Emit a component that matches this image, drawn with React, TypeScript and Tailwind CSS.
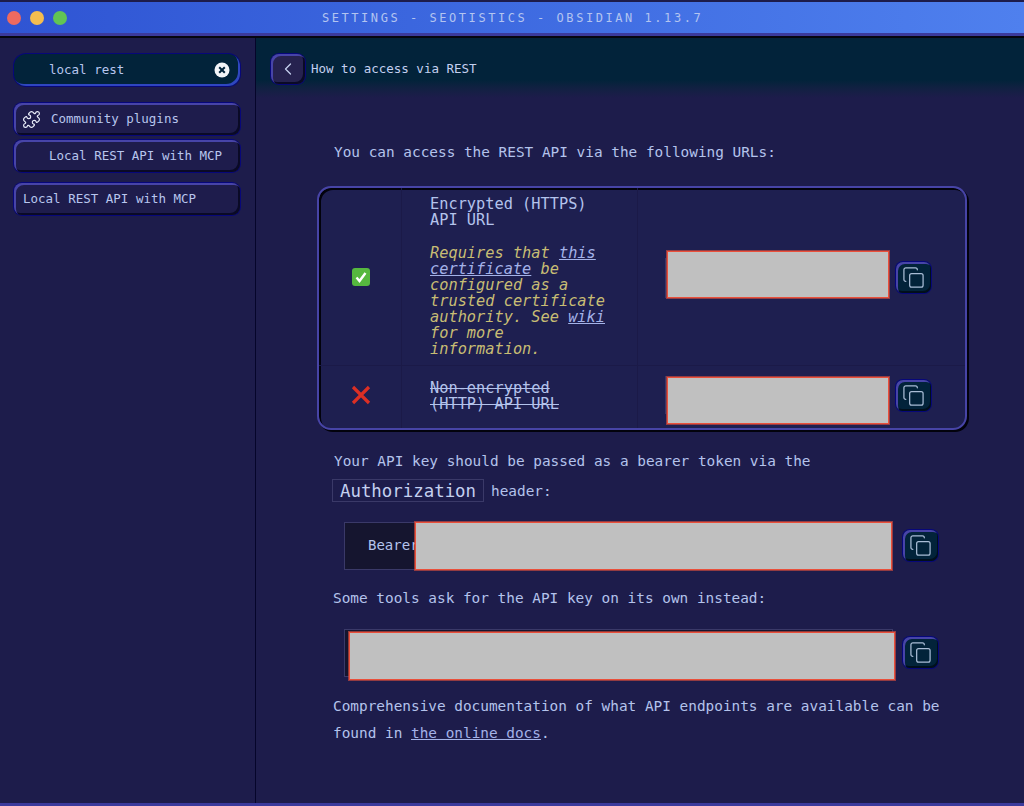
import { ChevronLeft, Copy, Puzzle } from "lucide-react";

function CopyButton({ className }: { className?: string }) {
  return (
    <button
      className={`flex h-[31px] w-[35px] shrink-0 items-center justify-center rounded-[7px] bg-[#02233a] text-[#a9bdd6] shadow-[inset_2px_2px_0_#4744a8,inset_-1px_-2px_0_#010f1c,0_0_0_1px_#07077a] ${className ?? ""}`}
    >
      <Copy size={23} strokeWidth={1.3} />
    </button>
  );
}

function NavItem({ children, className }: { children: React.ReactNode; className?: string }) {
  return (
    <div
      className={`flex h-[32px] w-[226px] items-center rounded-[8px] bg-[#1e1c4c] text-[12.5px] text-[#b8c6ee] shadow-[inset_2px_2px_0_#4744a8,inset_-2px_-2px_0_#0a0a26,0_0_0_1px_#07077a] ${className ?? ""}`}
    >
      {children}
    </div>
  );
}

function Redacted({ className }: { className: string }) {
  return (
    <div
      className={`absolute border border-[#ea503b] bg-[#c0c0c0] shadow-[0_0_0_1px_rgba(226,80,60,0.6)] ${className}`}
    />
  );
}

export default function App() {
  return (
    <div className="flex h-[806px] w-[1024px] flex-col overflow-hidden bg-[#1d1c4b] font-['DejaVu_Sans_Mono',monospace] text-[#b4c3ec]">
      {/* title bar */}
      <div className="mt-[2px] flex h-[31px] shrink-0 items-center bg-gradient-to-r from-[#2f54d3] to-[#4f80ee] pl-[7px]">
        <div className="flex gap-[9px]">
          <span className="h-[14px] w-[14px] rounded-full bg-[#ee6a5f]" />
          <span className="h-[14px] w-[14px] rounded-full bg-[#f5bd4f]" />
          <span className="h-[14px] w-[14px] rounded-full bg-[#61c454]" />
        </div>
        <div className="ml-[255px] whitespace-nowrap text-[12px] tracking-[2.55px] text-[#b3c4f0]">
          SETTINGS - SEOTISTICS - OBSIDIAN 1.13.7
        </div>
      </div>

      <div className="flex min-h-0 flex-1 flex-col border-t-[3px] border-b-[3px] border-[#3b3a9c]">
        <div className="flex min-h-0 flex-1 border-t-2 border-[#05060f]">
          {/* sidebar */}
          <div className="w-[256px] shrink-0 border-r border-[#05052a] pl-[14px] pt-[16px]">
            <div className="flex h-[32px] w-[226px] items-center rounded-[12px] bg-[#02233a] pl-[35px] pr-[10px] text-[12.5px] text-[#b8c6ee] shadow-[inset_-2px_-2px_0_#2f46c0,0_0_0_1px_#07077a]">
              <span className="flex-1">local rest</span>
              <svg width="16" height="16" viewBox="0 0 16 16">
                <circle cx="8" cy="8" r="7.5" fill="#f2f4f8" />
                <path d="M5.2 5.2l5.6 5.6M10.8 5.2l-5.6 5.6" stroke="#02233a" strokeWidth="2" />
              </svg>
            </div>
            <NavItem className="mt-[17px] pl-[8px]">
              <Puzzle size={19} strokeWidth={1.5} className="text-[#e8ecf8]" />
              <span className="ml-[10px]">Community plugins</span>
            </NavItem>
            <NavItem className="mt-[5px] pl-[35px]">Local REST API with MCP</NavItem>
            <NavItem className="mt-[11px] pl-[9px]">Local REST API with MCP</NavItem>
          </div>

          {/* main */}
          <div className="min-w-0 flex-1">
            <div className="flex h-[60px] items-center bg-gradient-to-b from-[#02233a] from-70% to-[#1d1c4b] pt-[2px] pl-[15px]">
              <button className="flex h-[30px] w-[34px] items-center justify-center rounded-[8px] bg-[#26224f] text-[#c4cfee] shadow-[inset_2px_2px_0_#4744a8,inset_-2px_-2px_0_#0a0a26,0_0_0_1px_#07077a]">
                <ChevronLeft size={20} strokeWidth={1.5} />
              </button>
              <span className="ml-[6px] text-[12.5px] text-[#c4d0f0]">How to access via REST</span>
            </div>

            <div className="pl-[61px] pt-[41px]">
              <p className="pl-[17px] text-[14.4px] leading-[27px]">
                You can access the REST API via the following URLs:
              </p>

              {/* url table */}
              <div className="mt-[20px] grid h-[244px] w-[650px] grid-cols-[83px_236px_1fr] grid-rows-[178px_1fr] rounded-[14px] border-2 border-[#4744a6] bg-[#1e1f50] text-[15.3px] leading-[16px] shadow-[inset_2px_2px_0_#02020c,2px_2px_0_#02020c]">
                <div className="flex items-center justify-center border-r border-b border-[#1b1a48] pl-[2px]">
                  <svg width="20" height="20" viewBox="0 0 20 20">
                    <rect x="1" y="1" width="18" height="18" rx="3" fill="#56b83f" />
                    <path d="M5.5 10.5l3 3.5 6-8" fill="none" stroke="#fff" strokeWidth="2.4" />
                  </svg>
                </div>
                <div className="border-r border-b border-[#1b1a48] pl-[28px] pt-[8px]">
                  <div>
                    Encrypted (HTTPS)
                    <br />
                    API URL
                  </div>
                  <div className="mt-[17px] w-[190px] italic text-[#c8bd74]">
                    Requires that{" "}
                    <a className="font-medium text-[#a4b2e8] underline">this certificate</a> be
                    configured as a trusted certificate authority. See{" "}
                    <a className="text-[#a4b2e8] underline">wiki</a> for more information.
                  </div>
                </div>
                <div className="flex items-center gap-[7px] border-b border-[#1b1a48] pl-[27px]">
                  <div className="relative mt-[2px] h-[40px] w-[224px] border-l border-[#3a3968]">
                    <Redacted className="-top-[7px] left-[1px] h-[47px] w-[222px]" />
                  </div>
                  <CopyButton className="mt-[2px]" />
                </div>

                <div className="flex items-center justify-center border-r border-[#1b1a48] pb-[5px] pl-[2px]">
                  <svg width="20" height="20" viewBox="0 0 20 20">
                    <path d="M2 2l16 16M18 2L2 18" stroke="#dc2f24" strokeWidth="3.2" />
                  </svg>
                </div>
                <div className="flex items-center border-r border-[#1b1a48] pl-[28px] pb-[3px] line-through">
                  <div>
                    Non-encrypted
                    <br />
                    (HTTP) API URL
                  </div>
                </div>
                <div className="flex items-center gap-[7px] pl-[27px]">
                  <div className="relative -mt-[4px] h-[38px] w-[224px] border-l border-[#3a3968]">
                    <Redacted className="top-[1px] left-[1px] h-[47px] w-[222px]" />
                  </div>
                  <CopyButton className="-mt-[4px]" />
                </div>
              </div>

              <p className="mt-[18px] pl-[17px] text-[14.4px] leading-[27px]">
                Your API key should be passed as a bearer token via the
              </p>
              <div className="ml-[15px] mt-[4px] flex items-center">
                <code className="flex h-[23px] w-[152px] items-center justify-center border border-[#3a3968] font-['DejaVu_Sans_Mono',monospace] text-[17.4px] text-[#c4d0f0]">
                  Authorization
                </code>
                <span className="ml-[7px] mt-[2px] text-[14.4px]">header:</span>
              </div>

              {/* bearer */}
              <div className="ml-[27px] mt-[19px] flex items-center gap-[11px]">
                <div className="relative flex h-[48px] w-[548px] items-center border border-[#3a3968] bg-[#15152f] pl-[23px] text-[14px]">
                  Bearer
                  <Redacted className="-top-px left-[70px] h-[48px] w-[477px]" />
                </div>
                <CopyButton />
              </div>

              <p className="mt-[15px] pl-[16px] text-[14.4px] leading-[27px]">
                Some tools ask for the API key on its own instead:
              </p>

              <div className="ml-[27px] mt-[17px] flex items-center gap-[10px]">
                <div className="relative h-[48px] w-[549px] border border-[#3a3968] bg-[#15152f]">
                  <Redacted className="top-[2px] left-[4px] h-[48px] w-[546px]" />
                </div>
                <CopyButton />
              </div>

              <p className="mt-[16px] w-[640px] pl-[16px] text-[14.4px] leading-[27px]">
                Comprehensive documentation of what API endpoints are available can be found in{" "}
                <a className="text-[#a4b2e8] underline">the online docs</a>.
              </p>
            </div>
          </div>
        </div>
      </div>
    </div>
  );
}
